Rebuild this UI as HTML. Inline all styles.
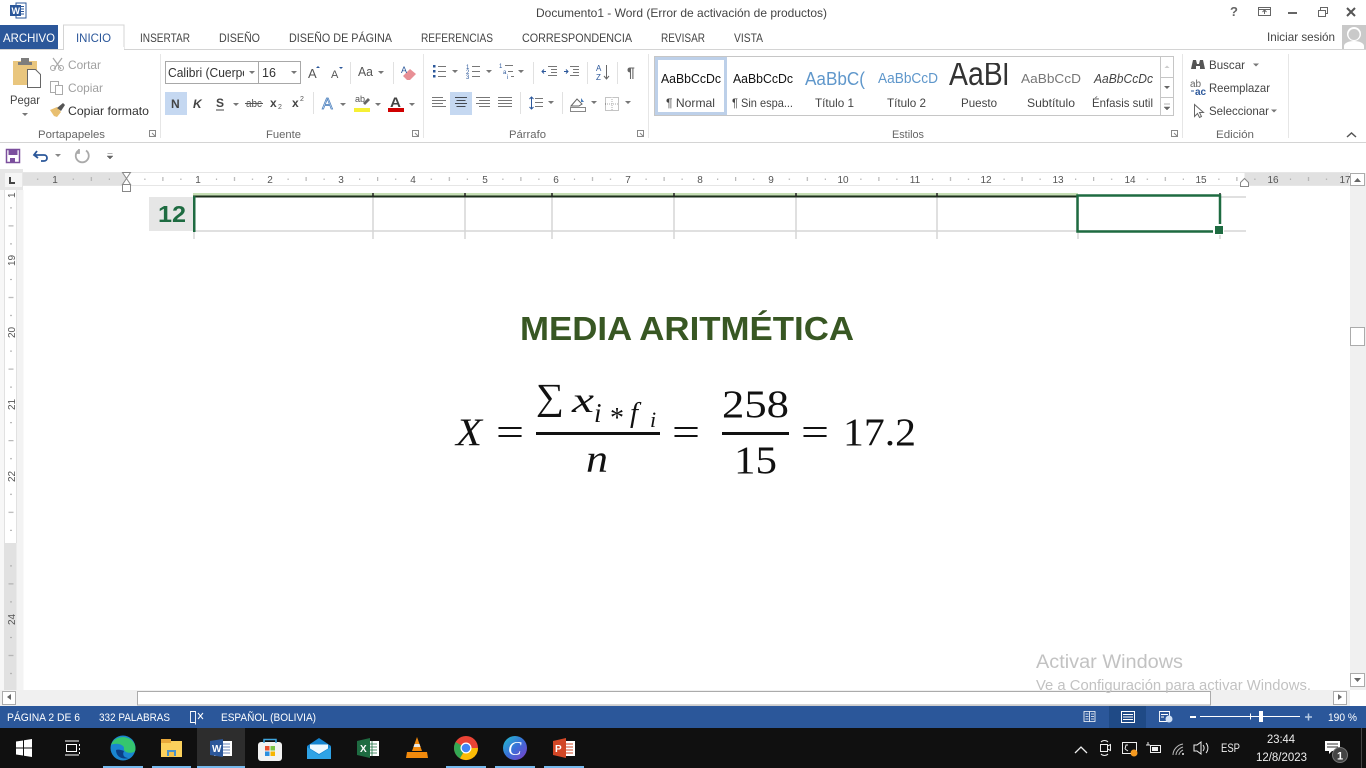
<!DOCTYPE html>
<html lang="es"><head><meta charset="utf-8"><title>Documento1 - Word</title>
<style>
html,body{margin:0;padding:0;background:#fff;width:1366px;height:768px;overflow:hidden}
svg{display:block;position:absolute;left:0;top:0}
text{font-family:"Liberation Sans",sans-serif;font-size:12px;fill:#444}
.t{fill:#444}.g{fill:#a0a0a0}.w{fill:#fff}.l{fill:#666;font-size:11px}.r{fill:#555;font-size:10px}
.m{font-family:"Liberation Serif",serif}.i{font-style:italic}
.ic{fill:none;stroke:#666;stroke-width:1}
</style></head><body>
<svg width="1366" height="768" viewBox="0 0 1366 768" lang="es">
<defs>
<pattern id="ht" x="126.4" y="173" width="71.6" height="12" patternUnits="userSpaceOnUse">
<rect x="18" y="5.5" width="1" height="1.5" fill="#a8a8a8"/><rect x="36" y="4" width="1" height="4" fill="#a8a8a8"/><rect x="54" y="5.5" width="1" height="1.5" fill="#a8a8a8"/>
</pattern>
<pattern id="vt" x="5" y="189.4" width="12" height="71.6" patternUnits="userSpaceOnUse">
<rect x="5" y="18" width="2" height="1" fill="#a8a8a8"/><rect x="3.5" y="36" width="5" height="1" fill="#a8a8a8"/><rect x="5" y="54" width="2" height="1" fill="#a8a8a8"/>
</pattern>
<clipPath id="c1"><rect x="167" y="62" width="77" height="20"/></clipPath>
<clipPath id="c2"><rect x="656" y="63" width="500" height="32"/></clipPath>
<linearGradient id="cv" x1="0" y1="0" x2="1" y2="1"><stop offset="0" stop-color="#22c3cf"/><stop offset=".5" stop-color="#3a6fd8"/><stop offset="1" stop-color="#7d3cc8"/></linearGradient>
</defs>

<!-- title bar -->
<rect width="1366" height="768" fill="#fff"/>
<rect x="16" y="3" width="10" height="15" fill="#fff" stroke="#2b579a"/><path d="M19 6.5h5M19 9h5M19 11.5h5M19 14h5" stroke="#2b579a"/>
<rect x="10" y="5" width="11" height="11" fill="#2b579a"/><text x="11.5" y="14" style="font-size:9px;font-weight:bold;fill:#fff">W</text>
<text x="536" y="17" textLength="291" lengthAdjust="spacingAndGlyphs">Documento1 - Word (Error de activación de productos)</text>
<text x="1230" y="16" style="font-size:13px;font-weight:bold;fill:#666">?</text>
<rect x="1258.5" y="7.5" width="12" height="8" fill="none" stroke="#666"/><path d="M1258 9.500h13M1264.500 14v-4M1262.500 12l2-2 2 2" fill="none" stroke="#666"/>
<rect x="1288" y="12" width="9" height="2" fill="#666"/>
<rect x="1318.500" y="10.500" width="7" height="6" fill="#fff" stroke="#666"/><path d="M1320.500 10v-2.500h7v6h-2" fill="none" stroke="#666"/>
<path d="M1347 8l8 8M1355 8l-8 8" stroke="#555" stroke-width="2"/>

<!-- tabs -->
<rect x="0" y="25" width="58" height="25" fill="#2b579a"/>
<text x="3" y="42" textLength="52" lengthAdjust="spacingAndGlyphs" class="w">ARCHIVO</text>
<path d="M0 49.500h63.500v-24.500h60.500v24.500h1242" fill="none" stroke="#d4d4d4"/>
<rect x="64" y="47" width="60" height="3" fill="#fff"/>
<text x="76" y="42" textLength="35" lengthAdjust="spacingAndGlyphs" style="fill:#2b579a">INICIO</text>
<text x="140" y="42" textLength="50" lengthAdjust="spacingAndGlyphs">INSERTAR</text>
<text x="219" y="42" textLength="41" lengthAdjust="spacingAndGlyphs">DISEÑO</text>
<text x="289" y="42" textLength="103" lengthAdjust="spacingAndGlyphs">DISEÑO DE PÁGINA</text>
<text x="421" y="42" textLength="72" lengthAdjust="spacingAndGlyphs">REFERENCIAS</text>
<text x="522" y="42" textLength="110" lengthAdjust="spacingAndGlyphs">CORRESPONDENCIA</text>
<text x="661" y="42" textLength="44" lengthAdjust="spacingAndGlyphs">REVISAR</text>
<text x="734" y="42" textLength="29" lengthAdjust="spacingAndGlyphs">VISTA</text>
<text x="1267" y="41" textLength="68" lengthAdjust="spacingAndGlyphs">Iniciar sesión</text>
<rect x="1342" y="25" width="24" height="24" fill="#c9c9c9"/>
<path d="M1344 49v-3c0-3 5-5 10-5s10 2 10 5v3z" fill="#fff"/><circle cx="1354" cy="34" r="7" fill="#fff"/><circle cx="1354" cy="34.500" r="5.500" fill="#c9c9c9"/>

<!-- ribbon separators -->
<path d="M160.500 54v84M423.500 54v84M648.500 54v84M1182.500 54v84M1288.500 54v84" stroke="#e6e6e6"/>
<path d="M0 142.500h1366" stroke="#d4d4d4"/>

<!-- clipboard -->
<rect x="13" y="61" width="24" height="24" fill="#e9c67e"/><rect x="21" y="58" width="8" height="5" fill="#7d7d7d"/><rect x="18" y="62" width="14" height="3" fill="#7d7d7d"/>
<path d="M27.500 69.500h8l5 5v13h-13z" fill="#fff" stroke="#666"/>
<text x="10" y="104" textLength="30" lengthAdjust="spacingAndGlyphs">Pegar</text>
<path d="M22 113h6l-3 3z" fill="#777"/>
<path d="M53 58l8 11M62 58l-8 11" stroke="#a8a8a8" stroke-width="1.200"/><circle cx="53" cy="68" r="2.500" fill="none" stroke="#a8a8a8"/><circle cx="61" cy="68" r="2.500" fill="none" stroke="#a8a8a8"/>
<text x="68" y="69" textLength="33" lengthAdjust="spacingAndGlyphs" class="g">Cortar</text>
<rect x="50.500" y="81.500" width="8" height="11" fill="none" stroke="#aaa"/><rect x="55.500" y="85.500" width="7" height="9" fill="#fff" stroke="#aaa"/>
<text x="68" y="92" textLength="35" lengthAdjust="spacingAndGlyphs" class="g">Copiar</text>
<path d="M50 110l7-3 4 5-4 5-3-1-4-6z" fill="#e8bf70"/><path d="M57 108l6-5 2 2-4 6z" fill="#555"/>
<text x="68" y="115" textLength="81" lengthAdjust="spacingAndGlyphs" style="fill:#333">Copiar formato</text>
<text x="38" y="138" textLength="67" class="l" lengthAdjust="spacingAndGlyphs">Portapapeles</text>
<path d="M149.500 130.500h6v6h-6zM152 133l3 3" fill="none" stroke="#888"/>

<!-- font group -->
<rect x="165.500" y="61.500" width="135" height="22" fill="#fff" stroke="#a8a8a8"/><path d="M258.500 61v23" stroke="#a8a8a8"/>
<text x="168" y="77" clip-path="url(#c1)" style="font-size:12.500px;fill:#333" textLength="81" lengthAdjust="spacingAndGlyphs">Calibri (Cuerpo</text>
<path d="M249 71h6l-3 3zM291 71h6l-3 3z" fill="#777"/>
<text x="262" y="77" style="font-size:12.500px;fill:#333">16</text>
<text x="308" y="78" style="font-size:13px;fill:#555">A</text><path d="M316 68l2-2 2 2z" fill="#2b579a"/>
<text x="331" y="78" style="font-size:11px;fill:#555">A</text><path d="M339 67h4l-2 2z" fill="#2b579a"/>
<path d="M350.500 62v22" stroke="#e1e1e1"/><path d="M393.500 62v22" stroke="#e1e1e1"/>
<text x="358" y="76" style="font-size:13px;fill:#555" textLength="15" lengthAdjust="spacingAndGlyphs">Aa</text><path d="M378 71h6l-3 3z" fill="#777"/>
<path d="M403 76l7-7 6 5-6 6h-3z" fill="#e88f95"/><text x="401" y="73" style="font-size:9px;fill:#2b579a">A</text>
<rect x="165" y="92" width="22" height="23" fill="#c5d8f1"/>
<text x="171" y="108" style="font-size:12px;font-weight:bold;fill:#444">N</text>
<text x="193" y="108" style="font-size:12px;font-weight:bold;font-style:italic;fill:#444">K</text>
<text x="216" y="107" style="font-size:12px;font-weight:bold;fill:#444">S</text><path d="M216 110h8" stroke="#444"/>
<path d="M233 103h6l-3 3z" fill="#777"/>
<text x="246" y="107" style="font-size:11px;fill:#555" textLength="16" lengthAdjust="spacingAndGlyphs">abc</text><path d="M245 103.500h18" stroke="#555"/>
<text x="270" y="107" style="font-size:12px;font-weight:bold;fill:#444">x</text><text x="278" y="109" style="font-size:7px;fill:#555">2</text>
<text x="292" y="107" style="font-size:12px;font-weight:bold;fill:#444">x</text><text x="300" y="101" style="font-size:7px;fill:#555">2</text>
<path d="M313.500 92v22" stroke="#e1e1e1"/>
<text x="322" y="109" style="font-size:16px;fill:#cfe0f5;stroke:#4a7ebb;stroke-width:.7">A</text><path d="M340 103h6l-3 3z" fill="#777"/>
<text x="355" y="102" style="font-size:9px;fill:#555">ab</text><path d="M363 103l5-5 2 2-5 5z" fill="#666"/><rect x="354" y="108" width="16" height="4" fill="#f6f035"/><path d="M375 103h6l-3 3z" fill="#777"/>
<text x="390" y="107" style="font-size:14px;font-weight:bold;fill:#444" textLength="11" lengthAdjust="spacingAndGlyphs">A</text><rect x="388" y="108" width="16" height="4" fill="#d00000"/><path d="M409 103h6l-3 3z" fill="#777"/>
<text x="266" y="138" textLength="35" class="l" lengthAdjust="spacingAndGlyphs">Fuente</text>
<path d="M412.500 130.500h6v6h-6zM415 133l3 3" fill="none" stroke="#888"/>

<!-- paragraph -->
<g fill="none" stroke="#777">
<path d="M438 66.500h8M438 71.500h8M438 76.500h8M472 66.500h8M472 71.500h8M472 76.500h8M505 65.500h8M508 71.500h5M511 76.500h3"/>
<path d="M548 66.500h9M551 69.500h6M551 72.500h6M548 75.500h9M570 66.500h9M573 69.500h6M573 72.500h6M570 75.500h9"/>
<path d="M432 97.500h11M432 100.500h14M432 103.500h11M432 106.500h14M476 97.500h14M479 100.500h11M476 103.500h14M479 106.500h11M498 97.500h14M498 100.500h14M498 103.500h14M498 106.500h14M535 98.500h8M535 102.500h8M535 106.500h8"/>
<path d="M455 97.500h12M456.500 100.500h9M455 103.500h12M456.500 106.500h9" stroke="#555"/>
</g>
<g fill="#2b579a"><rect x="433" y="65" width="2.500" height="2.500"/><rect x="433" y="70" width="2.500" height="2.500"/><rect x="433" y="75" width="2.500" height="2.500"/></g>
<rect x="450" y="92" width="22" height="23" fill="#c5d8f1" style="mix-blend-mode:multiply"/>
<g><text x="466" y="69" style="font-size:6px;fill:#2b579a">1</text><text x="466" y="74" style="font-size:6px;fill:#2b579a">2</text><text x="466" y="79" style="font-size:6px;fill:#2b579a">3</text><text x="499" y="68" style="font-size:6px;fill:#2b579a">1</text><text x="503" y="74" style="font-size:6px;fill:#2b579a">a</text><text x="507" y="79" style="font-size:6px;fill:#2b579a">i</text></g>
<path d="M452 70h6l-3 3zM486 70h6l-3 3zM518 70h6l-3 3zM548 101h6l-3 3zM591 101h6l-3 3zM625 101h6l-3 3z" fill="#777"/>
<path d="M546 71.500h-4m2-2l-2 2 2 2M564 71.500h4m-2-2l2 2-2 2" fill="none" stroke="#2b579a"/>
<path d="M533.500 62v22M587.500 62v22M617.500 62v22M520.500 92v22M562.500 92v22" stroke="#e1e1e1"/>
<text x="596" y="71" style="font-size:8px;fill:#2b579a">A</text><text x="596" y="80" style="font-size:8px;fill:#2b579a">Z</text><path d="M606.500 65v14m-2.500-3l2.500 3 2.500-3" fill="none" stroke="#666"/>
<text x="627" y="77" style="font-size:14px;font-weight:bold;fill:#666">¶</text>
<path d="M531.500 97v12m-2-10l2-2 2 2m-4 8l2 2 2-2" fill="none" stroke="#2b579a"/>
<path d="M571 106l6-7 5 5-3 2z" fill="#fff" stroke="#666"/><path d="M581 98l3 4h-3z" fill="#4a7ebb"/><rect x="570.500" y="107.500" width="15" height="4" fill="#fff" stroke="#888"/>
<rect x="605.500" y="97.500" width="13" height="13" fill="none" stroke="#888" stroke-dasharray="1 1"/><path d="M612 97v13M605 104h13" stroke="#aaa" stroke-dasharray="1 1"/>
<text x="509" y="138" textLength="37" class="l" lengthAdjust="spacingAndGlyphs">Párrafo</text>
<path d="M637.500 130.500h6v6h-6zM640 133l3 3" fill="none" stroke="#888"/>

<!-- styles -->
<rect x="654.500" y="56.500" width="519" height="59" fill="#fff" stroke="#c6c6c6"/>
<path d="M1160.500 56v59M1160 77.500h14M1160 97.500h14" stroke="#c6c6c6"/>
<path d="M1164.500 68l2.500-2.500 2.500 2.500z" fill="#ccc"/><path d="M1164 86h6l-3 3z" fill="#666"/><path d="M1164 104h6M1164 107h6l-3 3z" fill="#666" stroke="#666" stroke-width=".5"/>
<rect x="656.500" y="58.500" width="69" height="55" fill="none" stroke="#bdd0e9" stroke-width="3"/>
<g clip-path="url(#c2)">
<text x="661" y="83" textLength="60" lengthAdjust="spacingAndGlyphs" style="font-size:12.500px;fill:#111">AaBbCcDc</text>
<text x="733" y="83" textLength="60" lengthAdjust="spacingAndGlyphs" style="font-size:12.500px;fill:#111">AaBbCcDc</text>
<text x="805" y="85" textLength="60" lengthAdjust="spacingAndGlyphs" style="font-size:18px;fill:#5f97cb">AaBbC(</text>
<text x="878" y="83" textLength="60" lengthAdjust="spacingAndGlyphs" style="font-size:14.500px;fill:#5f97cb">AaBbCcD</text>
<text x="949" y="85" textLength="60" lengthAdjust="spacingAndGlyphs" style="font-size:33px;fill:#333">AaBl</text>
<text x="1021" y="83" textLength="60" lengthAdjust="spacingAndGlyphs" style="font-size:12.500px;fill:#777">AaBbCcD</text>
<text x="1094" y="83" textLength="59" lengthAdjust="spacingAndGlyphs" style="font-size:12.500px;font-style:italic;fill:#444">AaBbCcDc</text>
</g>
<text x="666" y="107" textLength="49" lengthAdjust="spacingAndGlyphs" style="fill:#444">¶ Normal</text>
<text x="732" y="107" textLength="61" lengthAdjust="spacingAndGlyphs">¶ Sin espa...</text>
<text x="815" y="107" textLength="39" lengthAdjust="spacingAndGlyphs">Título 1</text>
<text x="887" y="107" textLength="39" lengthAdjust="spacingAndGlyphs">Título 2</text>
<text x="961" y="107" textLength="36" lengthAdjust="spacingAndGlyphs">Puesto</text>
<text x="1027" y="107" textLength="48" lengthAdjust="spacingAndGlyphs">Subtítulo</text>
<text x="1092" y="107" textLength="61" lengthAdjust="spacingAndGlyphs">Énfasis sutil</text>
<text x="892" y="138" textLength="32" class="l" lengthAdjust="spacingAndGlyphs">Estilos</text>
<path d="M1171.500 130.500h6v6h-6zM1174 133l3 3" fill="none" stroke="#888"/>

<!-- edit -->
<path d="M1191 69l2-9h3l1 4h2l1-4h3l2 9h-5v-3h-4v3z" fill="#555"/>
<text x="1209" y="69" textLength="36" lengthAdjust="spacingAndGlyphs">Buscar</text><path d="M1253 63.500h6l-3 3z" fill="#777"/>
<text x="1190" y="87" style="font-size:10px;fill:#666">ab</text><text x="1195" y="95" style="font-size:10px;font-weight:bold;fill:#2b579a">ac</text><path d="M1191 91h3" stroke="#2b579a"/>
<text x="1209" y="92" textLength="61" lengthAdjust="spacingAndGlyphs">Reemplazar</text>
<path d="M1194.500 104.500v12l3-3 2 4 2-1-2-4h4z" fill="#fff" stroke="#666"/>
<text x="1209" y="115" textLength="60" lengthAdjust="spacingAndGlyphs">Seleccionar</text><path d="M1271 109.500h6l-3 3z" fill="#777"/>
<text x="1216" y="138" textLength="38" class="l" lengthAdjust="spacingAndGlyphs">Edición</text>
<path d="M1347 137l4.500-4 4.500 4" fill="none" stroke="#555" stroke-width="1.500"/>

<!-- QAT -->
<path d="M6.500 149.500h13v13h-13z" fill="#fff" stroke="#7b4f9d" stroke-width="1.500"/><rect x="8.500" y="150" width="9" height="5" fill="#7b4f9d"/><rect x="10" y="158" width="5" height="4" fill="#7b4f9d"/>
<path d="M37 151l-3 4 4 3M35 155h9c4 0 4 6 0 6h-3" fill="none" stroke="#2b579a" stroke-width="1.800"/>
<path d="M55 154h6l-3 3z" fill="#888"/>
<path d="M86 150.500a6.500 6.500 0 1 1-7.500 0M79 149v4h-3" fill="none" stroke="#aaa" stroke-width="1.800"/>
<path d="M107.500 153.500h5M107 156h6l-3 3z" fill="#666" stroke="#666" stroke-width=".5"/>

<!-- rulers area -->
<rect x="0" y="169" width="23" height="21" fill="#e6e6e6"/>
<rect x="5" y="173" width="17" height="14" fill="#f5f5f5"/>
<path d="M10 177v6h5" fill="none" stroke="#444" stroke-width="2"/>
<rect x="23" y="173" width="103.500" height="12" fill="#e1e1e1"/>
<rect x="126.500" y="173" width="1118" height="12" fill="#fff"/>
<rect x="1244.500" y="173" width="105" height="12" fill="#e1e1e1"/>
<path d="M23 172.500h1327M23 185.500h1327" stroke="#e6e6e6"/>
<rect x="23" y="173" width="1327" height="12" fill="url(#ht)"/>
<g text-anchor="middle">
<text x="55" y="183" class="r">1</text><text x="198" y="183" class="r">1</text><text x="270" y="183" class="r">2</text><text x="341" y="183" class="r">3</text><text x="413" y="183" class="r">4</text><text x="485" y="183" class="r">5</text><text x="556" y="183" class="r">6</text><text x="628" y="183" class="r">7</text><text x="700" y="183" class="r">8</text><text x="771" y="183" class="r">9</text><text x="843" y="183" class="r">10</text><text x="915" y="183" class="r">11</text><text x="986" y="183" class="r">12</text><text x="1058" y="183" class="r">13</text><text x="1130" y="183" class="r">14</text><text x="1201" y="183" class="r">15</text><text x="1273" y="183" class="r">16</text><text x="1345" y="183" class="r">17</text>
</g>
<path d="M122.500 172.500h8l-4 6 4 6h-8l4-6zM122.500 184.500h8v7h-8z" fill="#fff" stroke="#888"/>
<path d="M1240.500 186.500v-4l4-4 4 4v4z" fill="#fff" stroke="#888"/>

<!-- left ruler -->
<rect x="0" y="190" width="5" height="500" fill="#f7f7f7"/>
<rect x="5" y="190" width="11.500" height="353" fill="#fff"/>
<rect x="5" y="543" width="11.500" height="147" fill="#e1e1e1"/>
<rect x="16.500" y="190" width="7" height="500" fill="#f3f3f3"/>
<path d="M4.500 190v500M16.500 190v353" stroke="#e1e1e1"/>
<rect x="5" y="190" width="12" height="490" fill="url(#vt)"/>
<g>
<text transform="translate(15,266) rotate(-90)" class="r">19</text>
<text transform="translate(15,338) rotate(-90)" class="r">20</text>
<text transform="translate(15,410) rotate(-90)" class="r">21</text>
<text transform="translate(15,482) rotate(-90)" class="r">22</text>
<text transform="translate(15,625) rotate(-90)" class="r">24</text>
<text transform="translate(15,198) rotate(-90)" class="r">1</text>
</g>

<!-- table -->
<rect x="149" y="197" width="44" height="34" fill="#e6e6e6"/>
<text x="158" y="222" textLength="28" lengthAdjust="spacingAndGlyphs" style="font-size:23px;font-weight:bold;fill:#1e6b41">12</text>
<rect x="193" y="193" width="885" height="3" fill="#c6dfb5"/>
<path d="M193 231h1053M1220 197h26" stroke="#d6d6d6" stroke-width="1.500"/>
<path d="M373 197v42M465 197v42M552 197v42M674 197v42M796 197v42M937 197v42M1078 197v42M1220 197v42M194 231v8" stroke="#d6d6d6" stroke-width="1.500"/>
<path d="M193 196.500h885" stroke="#1b2e1b" stroke-width="2"/>
<path d="M373 193v4M465 193v4M552 193v4M674 193v4M796 193v4M937 193v4M1220 193v4" stroke="#222" stroke-width="1.500"/>
<rect x="193" y="196" width="2.500" height="36" fill="#1e6b41"/>
<rect x="1077.500" y="195.500" width="142.500" height="36" fill="none" stroke="#1e6b41" stroke-width="2.500"/>
<rect x="1213" y="224" width="11" height="11" fill="#fff"/><rect x="1215" y="226" width="8" height="8" fill="#1e6b41"/>

<!-- document -->
<text x="520" y="340" textLength="334" lengthAdjust="spacingAndGlyphs" style="font-size:33px;font-weight:bold;fill:#385723">MEDIA ARITMÉTICA</text>
<g>
<text x="456" y="445" class="m i" textLength="26" lengthAdjust="spacingAndGlyphs" style="font-size:39px;fill:#111">X</text>
<text x="496" y="445" class="m" textLength="28" lengthAdjust="spacingAndGlyphs" style="font-size:39px;fill:#111">=</text>
<text x="536" y="409" class="m" textLength="28" lengthAdjust="spacingAndGlyphs" style="font-size:37px;fill:#111">∑</text>
<text x="572" y="412" class="m i" textLength="22" lengthAdjust="spacingAndGlyphs" style="font-size:36px;fill:#111">x</text>
<text x="594" y="422" class="m i" style="font-size:27px;fill:#111">i</text>
<text x="610" y="427" class="m" style="font-size:28px;fill:#111">*</text>
<text x="630" y="422" class="m i" style="font-size:29px;fill:#111">f</text>
<text x="650" y="427" class="m i" style="font-size:22px;fill:#111">i</text>
<rect x="536" y="432" width="124" height="3" fill="#111"/>
<text x="586" y="472" class="m i" textLength="22" lengthAdjust="spacingAndGlyphs" style="font-size:39px;fill:#111">n</text>
<text x="672" y="445" class="m" textLength="28" lengthAdjust="spacingAndGlyphs" style="font-size:39px;fill:#111">=</text>
<text x="722" y="417" class="m" textLength="67" lengthAdjust="spacingAndGlyphs" style="font-size:39px;fill:#111">258</text>
<rect x="722" y="432" width="67" height="3" fill="#111"/>
<text x="734" y="473" class="m" textLength="43" lengthAdjust="spacingAndGlyphs" style="font-size:39px;fill:#111">15</text>
<text x="801" y="445" class="m" textLength="28" lengthAdjust="spacingAndGlyphs" style="font-size:39px;fill:#111">=</text>
<text x="843" y="445" class="m" textLength="73" lengthAdjust="spacingAndGlyphs" style="font-size:39px;fill:#111">17.2</text>
</g>

<!-- vertical scrollbar -->
<rect x="1350" y="173" width="16" height="517" fill="#f0f0f0"/>
<rect x="1350.500" y="173.500" width="14" height="12" fill="#fff" stroke="#ababab"/><path d="M1354 182l3.500-4 3.500 4z" fill="#666"/>
<rect x="1350.500" y="327.500" width="14" height="18" fill="#fff" stroke="#ababab"/>
<rect x="1350.500" y="673.500" width="14" height="13" fill="#fff" stroke="#ababab"/><path d="M1354 678l3.500 4 3.500-4z" fill="#666"/>

<!-- horizontal scrollbar -->
<rect x="0" y="690" width="1350" height="16" fill="#f0f0f0"/>
<rect x="2.500" y="691.500" width="13" height="13" fill="#fff" stroke="#ababab"/><path d="M11 694v6l-4-3z" fill="#666"/>
<rect x="137.500" y="691.500" width="1073" height="13.500" fill="#fff" stroke="#ababab"/>
<rect x="1333.500" y="691.500" width="13" height="13" fill="#fff" stroke="#ababab"/><path d="M1338 694v6l4-3z" fill="#666"/>

<!-- watermark -->
<text x="1036" y="668" textLength="147" lengthAdjust="spacingAndGlyphs" style="font-size:19px;fill:#c2c2c2">Activar Windows</text>
<text x="1036" y="690" textLength="275" lengthAdjust="spacingAndGlyphs" style="font-size:14.500px;fill:#c2c2c2">Ve a Configuración para activar Windows.</text>

<!-- status bar -->
<rect x="0" y="706" width="1366" height="22" fill="#2b579a"/>
<text x="7" y="721" textLength="73" lengthAdjust="spacingAndGlyphs" style="font-size:11px;fill:#fff">PÁGINA 2 DE 6</text>
<text x="99" y="721" textLength="71" lengthAdjust="spacingAndGlyphs" style="font-size:11px;fill:#fff">332 PALABRAS</text>
<path d="M190.500 711.500h5v11h-5zM195.500 711.500v13" fill="none" stroke="#fff" stroke-width=".9"/><path d="M198 713l5 6M203 713l-5 6" stroke="#fff"/>
<text x="221" y="721" textLength="95" lengthAdjust="spacingAndGlyphs" style="font-size:11px;fill:#fff">ESPAÑOL (BOLIVIA)</text>
<rect x="1109" y="706" width="37" height="22" fill="#1f4a86"/>
<path d="M1084 711.500h11v10h-11zM1089.500 711.500v10M1085.500 714h3M1085.500 716.500h3M1085.500 719h3M1091 714h3M1091 716.500h3M1091 719h3" fill="none" stroke="#fff" stroke-width=".8"/>
<path d="M1121.500 711.500h13v11h-13zM1123 714.500h10M1123 717h10M1123 719.500h10" fill="none" stroke="#fff"/>
<path d="M1159.500 711.500h10v10h-10zM1161 714.500h7M1161 717h3" fill="none" stroke="#fff" stroke-width=".9"/><circle cx="1169" cy="719" r="3.500" fill="#cfe0f5"/>
<rect x="1190" y="716" width="6" height="2" fill="#fff"/>
<rect x="1200" y="716" width="100" height="1" fill="#fff"/><rect x="1250" y="713.500" width="1" height="6" fill="#fff"/><rect x="1259" y="711" width="4" height="11" fill="#fff"/>
<path d="M1305 717h7M1308.500 713.500v7" stroke="#b8cce4" stroke-width="1.500"/>
<text x="1328" y="721" textLength="29" lengthAdjust="spacingAndGlyphs" style="font-size:11px;fill:#fff">190 %</text>

<!-- taskbar -->
<rect x="0" y="728" width="1366" height="40" fill="#101010"/>
<rect x="197" y="728" width="48" height="40" fill="#2d2d2d"/>
<g fill="#76b9ed"><rect x="103" y="766" width="40" height="2"/><rect x="152" y="766" width="39" height="2"/><rect x="197" y="766" width="48" height="2"/><rect x="446" y="766" width="40" height="2"/><rect x="495" y="766" width="40" height="2"/><rect x="544" y="766" width="40" height="2"/></g>
<g fill="#fff"><path d="M16 741.500l7-1v7h-7zM24 740.300l8-1.300v8.500h-8zM16 748.500h7v7l-7-1zM24 748.500h8V757l-8-1.300z"/></g>
<path d="M65 741h14M65 755h14M66.500 744.500h10v7h-10z" fill="none" stroke="#fff"/><path d="M79.500 744v2M79.500 748v2M79.500 752v2" stroke="#fff"/>
<!-- edge -->
<circle cx="123" cy="748" r="12.500" fill="#1a86d0"/>
<path d="M111 745c3-9 17-11 23-2 2 4 2 8 0 9-5 2-11 0-10-4 0-3-7-6-13-3z" fill="#35c66e"/>
<path d="M116 750c0 6 5 10 13 8-5 0-7-3-5-7-2-1-6-2-8-1z" fill="#0a3f86"/>
<!-- explorer -->
<rect x="161" y="741" width="21" height="16" fill="#fcd15c"/><rect x="161" y="739" width="10" height="4" fill="#e8a83a"/><rect x="167" y="750" width="9" height="6" fill="#4b92c8"/><rect x="169" y="752" width="5" height="5" fill="#f3c14a"/>
<!-- word -->
<rect x="214" y="741" width="18" height="15" fill="#fff"/><path d="M222 744h8M222 747h8M222 750h8M222 753h8" stroke="#6a86b8"/>
<path d="M210 741l13-2v18l-13-2z" fill="#2b579a"/><text x="212" y="752" style="font-size:10px;font-weight:bold;fill:#fff">W</text>
<!-- store -->
<rect x="258" y="742" width="24" height="19" rx="3" fill="#f2f2f2"/><path d="M264 743v-3.500h12v3.500" fill="none" stroke="#3fa6e0" stroke-width="1.500"/>
<rect x="265" y="746" width="4.500" height="4.500" fill="#e8502e"/><rect x="270.500" y="746" width="4.500" height="4.500" fill="#7cc242"/><rect x="265" y="751.500" width="4.500" height="4.500" fill="#2b8fe0"/><rect x="270.500" y="751.500" width="4.500" height="4.500" fill="#f7b500"/>
<!-- mail -->
<path d="M307 746l12-8 12 8v13h-24z" fill="#1583cf"/><path d="M310 744.500h18v4l-9 5.500-9-5.500z" fill="#eef8fe"/><path d="M307 747l12 8 12-8v12h-24z" fill="#2fa3e6"/>
<!-- excel -->
<rect x="365" y="741" width="14" height="15" fill="#fff"/><path d="M367 744h10M367 747h10M367 750h10M367 753h10M372 741v15" stroke="#217346" stroke-width=".8"/>
<path d="M357 741l13-3v20l-13-3z" fill="#1e6b41"/><text x="360" y="752" style="font-size:10px;font-weight:bold;fill:#fff">X</text>
<!-- vlc -->
<path d="M417 737l5 14h-10z" fill="#f28a0c"/><path d="M414.500 744h5l1 3h-7z" fill="#e6e6e6"/><path d="M407 752h20l1 6h-22z" fill="#f28a0c"/>
<!-- chrome -->
<circle cx="466" cy="748" r="12" fill="#ea4335"/><path d="M466 748l-6 10.400A12 12 0 0 1 455.600 742z" fill="#34a853"/><path d="M466 748h12a12 12 0 0 1-18 10.400z" fill="#fbbc05"/><circle cx="466" cy="748" r="5.500" fill="#fff"/><circle cx="466" cy="748" r="4.300" fill="#4285f4"/>
<!-- canva -->
<circle cx="515" cy="748" r="12" fill="url(#cv)"/>
<text x="508" y="755" style="font-family:'Liberation Serif',serif;font-size:20px;font-style:italic;fill:#fff">C</text>
<!-- ppt -->
<rect x="560" y="741" width="15" height="15" fill="#fff"/><path d="M565 744h8M565 747h8M565 750h8M565 753h8" stroke="#d24726"/>
<path d="M553 741l13-3v20l-13-3z" fill="#d24726"/><text x="555" y="752" style="font-size:10px;font-weight:bold;fill:#fff">P</text>

<!-- tray -->
<path d="M1075 753l6-6 6 6" fill="none" stroke="#eee" stroke-width="1.300"/>
<path d="M1100.500 744.500h7v7h-7zM1107.500 746l3-1.500v6l-3-1.500" fill="none" stroke="#eee"/><path d="M1101 742c2-2 5-2 7 0M1101 754c2 2 5 2 7 0" fill="none" stroke="#eee"/>
<path d="M1122.500 742.500h14v11h-14z" fill="none" stroke="#eee"/><path d="M1128 745h-2l-1 4M1128 751l-3-2" fill="none" stroke="#eee"/><circle cx="1134" cy="753" r="3.500" fill="#f79a1f"/>
<path d="M1150.500 745.500h10v7h-10zM1146 745h4M1148 742v3" fill="none" stroke="#eee"/><rect x="1152" y="747" width="6" height="4" fill="#eee"/>
<path d="M1173 755c0-5 4-10 10-11M1176 755c0-3 3-7 7-8M1179 755c0-2 2-4 4-5" fill="none" stroke="#bbb"/><circle cx="1183" cy="754" r="1" fill="#eee"/>
<path d="M1194 745h3l4-3v12l-4-3h-3z" fill="none" stroke="#eee"/><path d="M1203 745c1.500 2 1.500 4 0 6M1206 743c2.500 3 2.500 7 0 10" fill="none" stroke="#eee"/>
<text x="1221" y="752" textLength="19" lengthAdjust="spacingAndGlyphs" style="font-size:12px;fill:#eee">ESP</text>
<text x="1267" y="743" textLength="28" lengthAdjust="spacingAndGlyphs" style="font-size:12px;fill:#eee">23:44</text>
<text x="1256" y="761" textLength="51" lengthAdjust="spacingAndGlyphs" style="font-size:11.500px;fill:#eee">12/8/2023</text>
<path d="M1325 741h15v10h-8l-3 3v-3h-4z" fill="#fff"/><path d="M1327 744h11M1327 747h11" stroke="#333"/>
<circle cx="1340" cy="755" r="7.500" fill="#444" stroke="#777"/><text x="1337" y="759.500" style="font-size:11px;font-weight:bold;fill:#fff">1</text>
<rect x="1361" y="728" width="1" height="40" fill="#444"/>
</svg>
</body></html>
